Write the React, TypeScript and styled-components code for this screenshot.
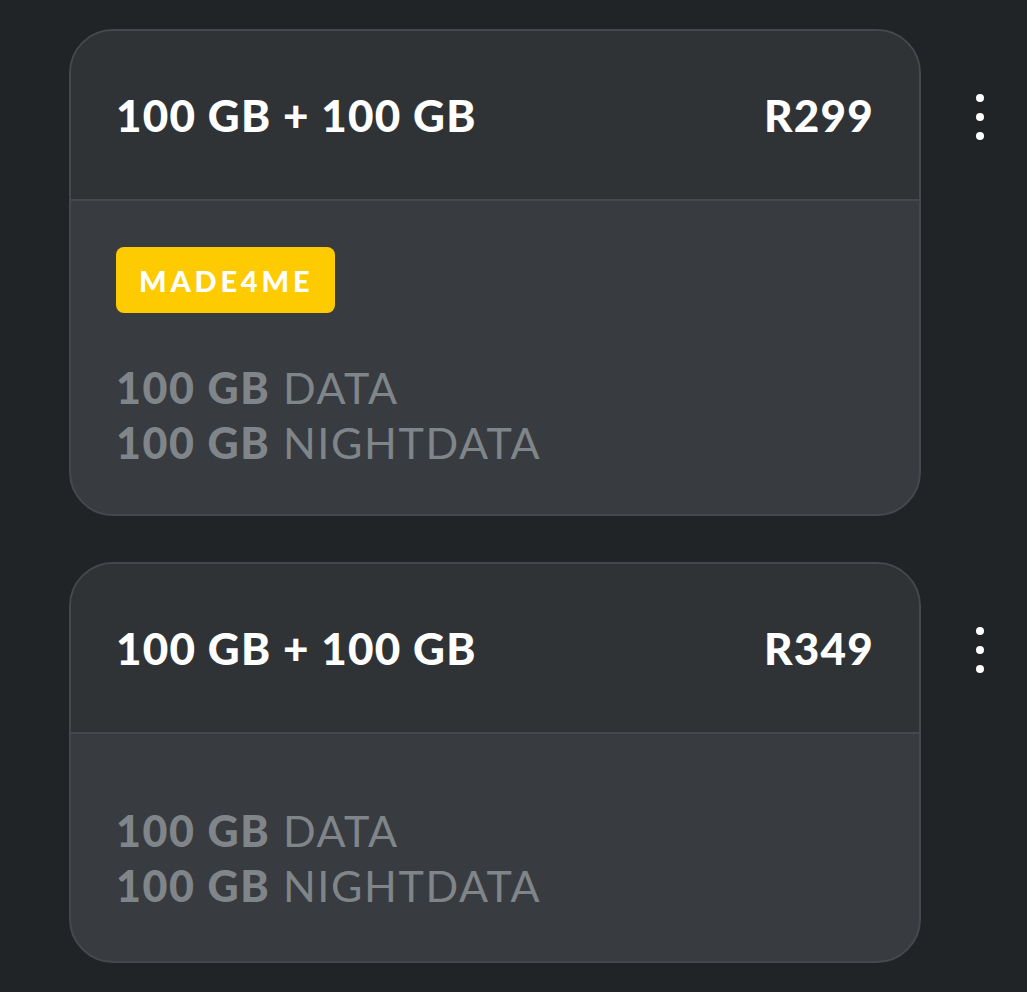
import React from "react";
import styled, { createGlobalStyle } from "styled-components";

const GlobalStyle = createGlobalStyle`
  html, body {
    margin: 0;
    padding: 0;
    background: #202426;
  }
  body {
    font-family: Lato, "Noto Sans", sans-serif;
  }
`;

const Page = styled.div`
  display: flex;
  flex-direction: column;
  gap: 46px;
  padding: 29px 0 0 69px;
`;

const Row = styled.div`
  display: flex;
  align-items: flex-start;
`;

const Card = styled.div`
  flex-shrink: 0;
  width: 852px;
  box-sizing: border-box;
  border: 2px solid #45494d;
  border-radius: 44px;
  overflow: hidden;
  background: #383c40;
`;

const CardHeader = styled.div`
  height: 168px;
  display: flex;
  align-items: center;
  justify-content: space-between;
  padding: 0 45px 0 45px;
  background: #2f3336;
  border-bottom: 2px solid #45494d;
`;

const Title = styled.span`
  color: #ffffff;
  font-size: 44px;
  font-weight: 900;
  letter-spacing: 1.2px;
`;

const CardBody = styled.div<{ $withBadge?: boolean }>`
  display: flex;
  flex-direction: column;
  align-items: flex-start;
  padding: ${(p) => (p.$withBadge ? "46px 45px 44px" : "69px 45px 48px")};
`;

const Badge = styled.span`
  display: inline-flex;
  align-items: center;
  height: 66px;
  padding: 0 22px 0 23px;
  box-sizing: border-box;
  border-radius: 8px;
  background: #fecb00;
  color: #ffffff;
  font-size: 29px;
  font-weight: 900;
  letter-spacing: 3.8px;
  margin-bottom: 47px;
`;

const Line = styled.div`
  color: #808589;
  font-size: 43px;
  line-height: 55px;
  font-weight: 400;
  letter-spacing: 1.6px;
`;

const Amount = styled.b`
  font-weight: 900;
`;

const Kebab = styled.button`
  flex-shrink: 0;
  width: 94px;
  height: 60px;
  margin: 58px 0 0 12px;
  display: flex;
  flex-direction: column;
  align-items: center;
  justify-content: center;
  gap: 11px;
  background: none;
  border: 0;
  padding: 0;
`;

const Dot = styled.span`
  width: 8px;
  height: 8px;
  border-radius: 50%;
  background: #ffffff;
`;

type Plan = {
  title: string;
  price: string;
  badge?: string;
  lines: { amount: string; label: string }[];
};

const plans: Plan[] = [
  {
    title: "100 GB + 100 GB",
    price: "R299",
    badge: "MADE4ME",
    lines: [
      { amount: "100 GB", label: "DATA" },
      { amount: "100 GB", label: "NIGHTDATA" },
    ],
  },
  {
    title: "100 GB + 100 GB",
    price: "R349",
    lines: [
      { amount: "100 GB", label: "DATA" },
      { amount: "100 GB", label: "NIGHTDATA" },
    ],
  },
];

export default function App() {
  return (
    <>
      <GlobalStyle />
      <Page>
        {plans.map((plan) => (
          <Row key={plan.price}>
            <Card>
              <CardHeader>
                <Title>{plan.title}</Title>
                <Title>{plan.price}</Title>
              </CardHeader>
              <CardBody $withBadge={!!plan.badge}>
                {plan.badge && <Badge>{plan.badge}</Badge>}
                {plan.lines.map((l) => (
                  <Line key={l.label}>
                    <Amount>{l.amount}</Amount> {l.label}
                  </Line>
                ))}
              </CardBody>
            </Card>
            <Kebab aria-label="More options">
              <Dot />
              <Dot />
              <Dot />
            </Kebab>
          </Row>
        ))}
      </Page>
    </>
  );
}
